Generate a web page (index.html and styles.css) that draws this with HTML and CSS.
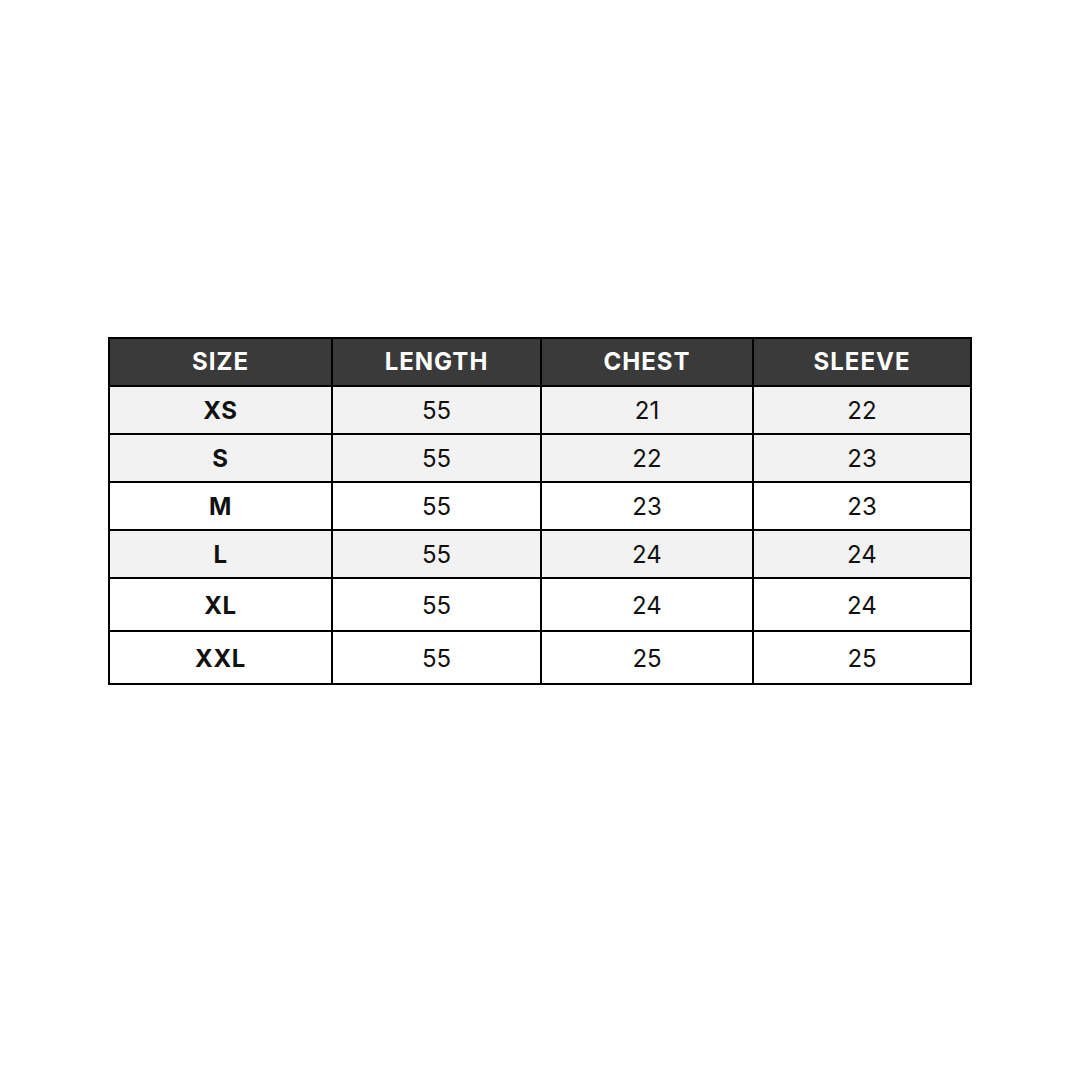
FILE: index.html
```html
<!DOCTYPE html>
<html lang="en">
<head>
<meta charset="utf-8">
<title>Size Chart</title>
<link rel="stylesheet" href="styles.css">
</head>
<body>
<main class="page">
  <div class="chart">
    <div class="cell head">SIZE</div>
    <div class="cell head">LENGTH</div>
    <div class="cell head">CHEST</div>
    <div class="cell head">SLEEVE</div>

    <div class="cell size shade">XS</div>
    <div class="cell shade">55</div>
    <div class="cell shade">21</div>
    <div class="cell shade">22</div>

    <div class="cell size shade">S</div>
    <div class="cell shade">55</div>
    <div class="cell shade">22</div>
    <div class="cell shade">23</div>

    <div class="cell size">M</div>
    <div class="cell">55</div>
    <div class="cell">23</div>
    <div class="cell">23</div>

    <div class="cell size shade">L</div>
    <div class="cell shade">55</div>
    <div class="cell shade">24</div>
    <div class="cell shade">24</div>

    <div class="cell size">XL</div>
    <div class="cell">55</div>
    <div class="cell">24</div>
    <div class="cell">24</div>

    <div class="cell size">XXL</div>
    <div class="cell">55</div>
    <div class="cell">25</div>
    <div class="cell">25</div>
  </div>
</main>
</body>
</html>
```

FILE: styles.css
```css
html, body {
  margin: 0;
  padding: 0;
  background: #ffffff;
}

.page {
  width: 1080px;
  height: 1080px;
  box-sizing: border-box;
  padding: 337px 0 0 108px;
  font-family: Inter, "Liberation Sans", sans-serif;
}

.chart {
  display: grid;
  width: 864px;
  box-sizing: border-box;
  grid-template-columns: 221px 207px 210px 216px;
  grid-template-rows: 46px 46px 46px 46px 46px 51px 51px;
  gap: 2px;
  padding: 2px;
  background: #000000;
}

.cell {
  display: flex;
  align-items: center;
  justify-content: center;
  background: #ffffff;
  color: #111111;
  font-size: 24px;
  font-weight: 400;
  line-height: 1;
  padding-top: 2px;
}

.cell.shade {
  background: #f2f2f2;
}

.cell.size {
  font-weight: 700;
  letter-spacing: 0.6px;
}

.cell.head {
  background: #3a3a3b;
  color: #ffffff;
  font-weight: 700;
  letter-spacing: 1px;
  padding-top: 0;
}
```
